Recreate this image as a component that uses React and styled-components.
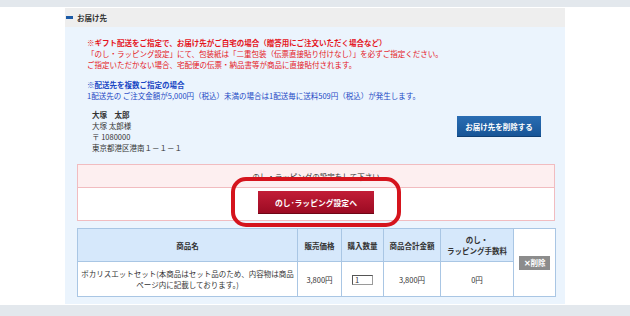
import React from "react";
import styled, { createGlobalStyle } from "styled-components";

const GlobalStyle = createGlobalStyle`
  html, body {
    margin: 0;
    padding: 0;
    background: #ffffff;
  }
  body {
    font-family: "Noto Sans CJK JP", "Noto Sans", sans-serif;
    color: #333333;
  }
`;

const Page = styled.div`
  width: 630px;
  height: 316px;
  overflow: hidden;
  display: flex;
  flex-flow: column;
`;

const Band = styled.div`
  flex: ${(p) => (p.$grow ? 1 : "none")};
  height: ${(p) => (p.$grow ? "auto" : "7px")};
  background: #e3e8ed;
`;

const Main = styled.div`
  padding: 1px 0 1px 65px;
`;

const Panel = styled.section`
  width: 500px;
  background: #ebf4fd;
`;

const Header = styled.div`
  display: flex;
  align-items: center;
  height: 19px;
  padding-left: 1px;
  background: #eeeeee;
`;

const Marker = styled.span`
  width: 7px;
  height: 3px;
  margin-right: 4px;
  background: #1b5aa6;
`;

const Title = styled.h2`
  margin: 0;
  font-size: 7.5px;
  font-weight: 700;
  color: #333333;
`;

const Body = styled.div`
  padding: 10px 10px 7px 12px;
`;

const Notice = styled.div`
  padding-left: 10px;
  margin-bottom: ${(p) => p.$gap || 0}px;
`;

const Line = styled.p`
  margin: 0;
  font-size: 7.5px;
  line-height: 11px;
  white-space: nowrap;
  font-weight: ${(p) => (p.$bold ? 700 : 400)};
  color: ${(p) => (p.$tone === "red" ? "#e5141c" : p.$tone === "blue" ? "#1a47c4" : "#333333")};
`;

const AddressRow = styled.div`
  display: flex;
  justify-content: space-between;
  align-items: flex-start;
  padding: 0 14px 0 15px;
  margin-bottom: 11px;
`;

const Address = styled.div``;

const BlueButton = styled.button`
  margin-top: 7px;
  width: 84px;
  height: 21px;
  padding: 0;
  border: none;
  border-bottom: 1px solid #0e3f74;
  background: linear-gradient(180deg, #2a6db3 0%, #175597 100%);
  color: #ffffff;
  font-family: inherit;
  font-size: 7.5px;
  font-weight: 700;
`;

const NoshiBox = styled.div`
  position: relative;
  border: 1px solid #f1bcc0;
  margin-bottom: 7px;
`;

const NoshiHead = styled.div`
  height: 23px;
  display: flex;
  align-items: center;
  justify-content: center;
  background: #fdeff0;
  border-bottom: 1px solid #f1bcc0;
  font-size: 7.5px;
  color: #333333;
  padding-top: 1px;
  box-sizing: border-box;
`;

const NoshiBody = styled.div`
  display: flex;
  justify-content: center;
  padding: 3px 0 6px 0;
  background: #ffffff;
`;

const RedButton = styled.button`
  width: 116px;
  height: 23px;
  padding: 0;
  border: none;
  border-bottom: 1px solid #6e0616;
  background: linear-gradient(180deg, #c21d37 0%, #9c0b23 100%);
  color: #ffffff;
  font-family: inherit;
  font-size: 7.8px;
  font-weight: 700;
`;

const Highlight = styled.div`
  position: absolute;
  left: 153px;
  top: 12px;
  width: 170px;
  height: 50px;
  box-sizing: border-box;
  border: 4px solid #d5141d;
  border-radius: 15px;
  pointer-events: none;
`;

const Table = styled.table`
  width: 479px;
  border-collapse: collapse;
  table-layout: fixed;
  background: #ffffff;
  font-size: 7.5px;
  line-height: 11px;
  color: #333333;
`;

const Th = styled.th`
  height: 32px;
  padding: 0;
  border: 1px solid #a9c6e4;
  background: ${(p) => (p.$plain ? "#ffffff" : "#d6e8fb")};
  font-weight: 700;
  text-align: center;
  vertical-align: middle;
`;

const Td = styled.td`
  height: 34px;
  padding: 0;
  border: 1px solid #a9c6e4;
  text-align: center;
  vertical-align: middle;
`;

const QtyInput = styled.input`
  width: 21px;
  height: 10px;
  box-sizing: border-box;
  padding: 0 2px;
  border: 1px solid #9a9a9a;
  border-top-color: #555555;
  border-left-color: #555555;
  font-family: inherit;
  font-size: 7.5px;
  line-height: 8px;
  color: #333333;
  vertical-align: middle;
`;

const DeleteButton = styled.button`
  width: 31px;
  height: 14px;
  padding: 0;
  border: none;
  background: #8c8c8c;
  color: #ffffff;
  font-family: inherit;
  font-size: 7.5px;
  font-weight: 700;
`;

const columns = [
  { label: "商品名", width: 220 },
  { label: "販売価格", width: 44 },
  { label: "購入数量", width: 42 },
  { label: "商品合計金額", width: 57 },
  { label: ["のし・", "ラッピング手数料"], width: 73 },
];

export default function App() {
  return (
    <Page>
      <GlobalStyle />
      <Band />
      <Main>
        <Panel>
          <Header>
            <Marker />
            <Title>お届け先</Title>
          </Header>
          <Body>
            <Notice $gap={9}>
              <Line $tone="red" $bold>
                ※ギフト配送をご指定で、お届け先がご自宅の場合（贈答用にご注文いただく場合など）
              </Line>
              <Line $tone="red">
                「のし・ラッピング設定」にて、包装紙は「二重包装（伝票直接貼り付けなし）」を必ずご指定ください。
              </Line>
              <Line $tone="red">
                ご指定いただかない場合、宅配便の伝票・納品書等が商品に直接貼付されます。
              </Line>
            </Notice>
            <Notice $gap={8}>
              <Line $tone="blue" $bold>
                ※配送先を複数ご指定の場合
              </Line>
              <Line $tone="blue">
                1配送先の ご注文金額が5,000円（税込）未満の場合は1配送毎に送料509円（税込）が発生します。
              </Line>
            </Notice>
            <AddressRow>
              <Address>
                <Line $bold>大塚　太郎</Line>
                <Line>大塚 太郎様</Line>
                <Line>〒 1080000</Line>
                <Line>東京都港区港南１－１－１</Line>
              </Address>
              <BlueButton>お届け先を削除する</BlueButton>
            </AddressRow>
            <NoshiBox>
              <NoshiHead>のし・ラッピングの設定をして下さい</NoshiHead>
              <NoshiBody>
                <RedButton>のし･ラッピング設定へ</RedButton>
              </NoshiBody>
              <Highlight />
            </NoshiBox>
            <Table>
              <colgroup>
                {columns.map((c, i) => (
                  <col key={i} style={{ width: c.width }} />
                ))}
                <col />
              </colgroup>
              <tbody>
                <tr>
                  {columns.map((c, i) => (
                    <Th key={i}>
                      {Array.isArray(c.label) ? (
                        <>
                          {c.label[0]}
                          <br />
                          {c.label[1]}
                        </>
                      ) : (
                        c.label
                      )}
                    </Th>
                  ))}
                  <Th $plain rowSpan={2}>
                    <DeleteButton>✕削除</DeleteButton>
                  </Th>
                </tr>
                <tr>
                  <Td>
                    ポカリスエットセット(本商品はセット品のため、内容物は商品
                    <br />
                    ページ内に記載しております。)
                  </Td>
                  <Td>3,800円</Td>
                  <Td>
                    <QtyInput defaultValue="1" />
                  </Td>
                  <Td>3,800円</Td>
                  <Td>0円</Td>
                </tr>
              </tbody>
            </Table>
          </Body>
        </Panel>
      </Main>
      <Band $grow />
    </Page>
  );
}
